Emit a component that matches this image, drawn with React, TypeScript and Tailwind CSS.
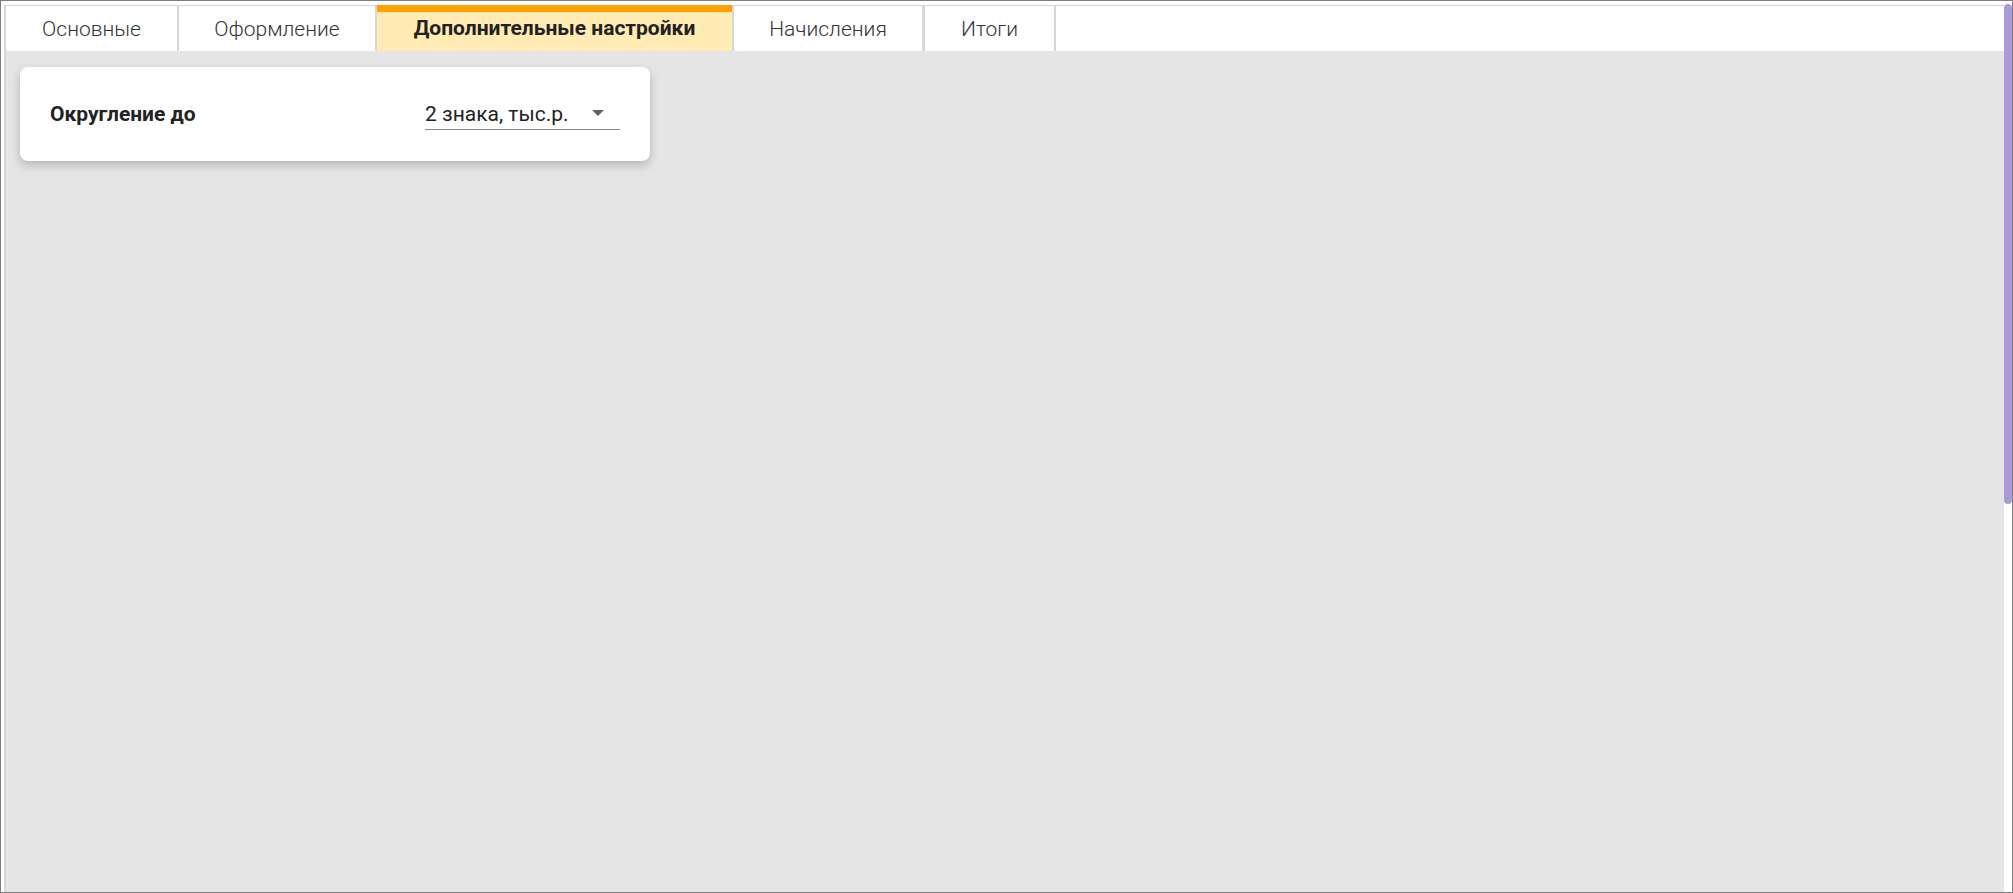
import { useState } from "react";

const tabs = [
  { label: "Основные", w: "w-[175px] border-l-2" },
  { label: "Оформление", w: "w-[198px]" },
  { label: "Дополнительные настройки", w: "w-[357px]" },
  { label: "Начисления", w: "w-[190px] border-r" },
  { label: "Итоги", w: "w-[132px] border-l" },
];

export default function App() {
  const [active, setActive] = useState(2);

  return (
    <div className="w-[2013px] h-[893px] border border-[#7f7f7f] bg-white flex font-['Roboto','Noto_Sans',sans-serif] overflow-hidden">
      <div className="flex-1 flex flex-col pt-[4px] pl-[3px] min-w-0">
        <div className="flex h-[46px] shrink-0 bg-white">
          {tabs.map((t, i) => (
            <button
              key={t.label}
              onClick={() => setActive(i)}
              className={
                i === active
                  ? `${t.w} h-full flex items-center justify-center pt-[2px] border-r-2 border-[#d6d6d6] bg-[#ffebb3] shadow-[inset_0_7px_0_#ffa200] text-[21px] font-bold text-[#222]`
                  : `${t.w} h-full flex items-center justify-center pt-[2px] border-r-2 border-t border-[#d6d6d6] border-t-[#d4d0e6] text-[21px] font-light text-[#333]`
              }
            >
              {t.label}
            </button>
          ))}
          <div className="flex-1 border-t border-[#d4d0e6]" />
        </div>

        <div className="flex-1 bg-[#e5e5e5] border-l-2 border-[#d6d6d6] pt-[16px] pl-[14px]">
          <div className="w-[630px] h-[94px] bg-white rounded-[8px] shadow-[0_4px_10px_rgba(0,0,0,0.22)] flex items-center pl-[30px]">
            <div className="w-[375px] pt-[2px] text-[21px] font-bold text-[#222]">Округление до</div>
            <div className="w-[195px] h-[32px] flex items-center justify-between border-b border-[#8a8a8a] pr-[16px]">
              <span className="pt-[2px] text-[21px] text-[#222]">2 знака, тыс.р.</span>
              <svg width="12" height="6" viewBox="0 0 12 6" className="mt-[-2px]">
                <path d="M0 0h12L6 6z" fill="#616161" />
              </svg>
            </div>
          </div>
        </div>
      </div>

      <div className="w-[8px] shrink-0 pt-[3px] bg-white">
        <div className="h-[500px] rounded-full bg-[#aa9ad6]" />
      </div>
    </div>
  );
}
